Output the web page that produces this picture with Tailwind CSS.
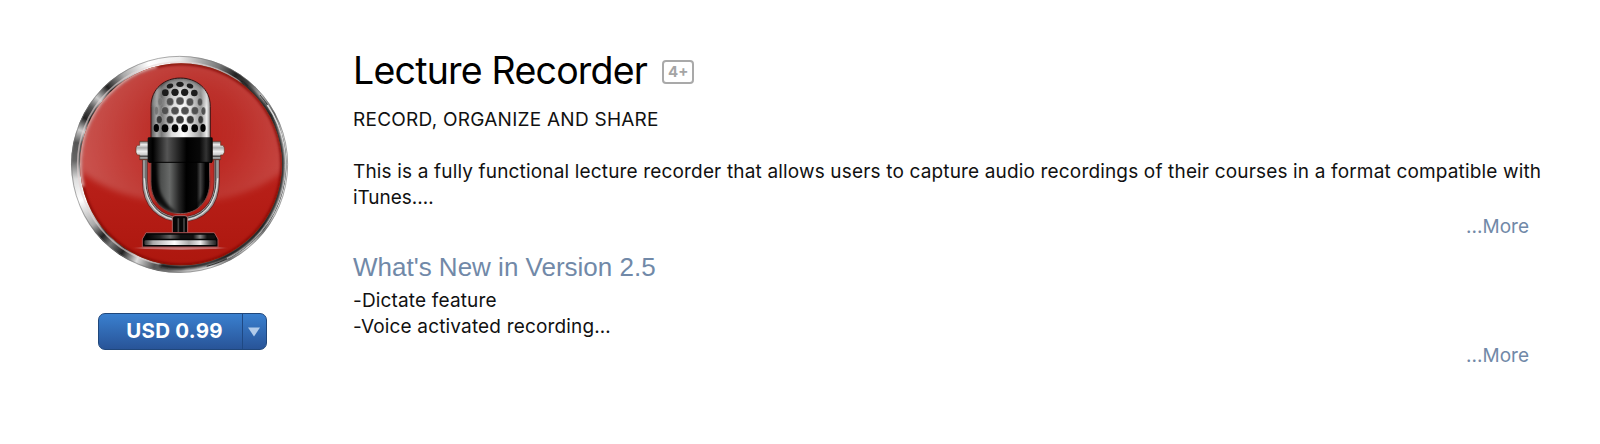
<!DOCTYPE html>
<html lang="en">
<head>
    <meta charset="UTF-8">
    <meta name="viewport" content="width=device-width, initial-scale=1.0">
    <title>Lecture Recorder</title>
    <script src="https://cdn.jsdelivr.net/npm/@tailwindcss/browser@4"></script>
</head>
<body class="bg-white text-[#111] font-['Inter','Liberation_Sans',sans-serif]">

    <main class="flex w-[1600px] h-[444px] overflow-hidden">

        <!-- Icon and price -->
        <aside class="w-[353px] shrink-0 pl-[60px] pt-[45px]">
            <div class="grid w-[240px] h-[240px]">
                <div class="[grid-area:1/1] ml-[11px] mt-[11px] w-[217px] h-[217px] rounded-full bg-[conic-gradient(#eee_0deg,#aaa_12deg,#777_22deg,#222_32deg,#444_40deg,#bbb_50deg,#555_62deg,#ddd_72deg,#fff_100deg,#ddd_118deg,#777_128deg,#eee_140deg,#777_152deg,#eee_163deg,#ccc_176deg,#777_186deg,#555_194deg,#ddd_204deg,#222_213deg,#777_221deg,#222_227deg,#aaa_235deg,#fff_250deg,#ddd_262deg,#666_272deg,#555_282deg,#ccc_289deg,#222_296deg,#555_303deg,#ccc_309deg,#222_317deg,#aaa_328deg,#fff_343deg,#eee_360deg)]"></div>
                <svg class="[grid-area:1/1]" width="240" height="240" viewBox="0 0 720 720">
                    <defs>
                        <linearGradient id="disc" x1="0" y1="0" x2="0" y2="1">
                            <stop offset="0" stop-color="#b92b25"/>
                            <stop offset=".5" stop-color="#ba211b"/>
                            <stop offset="1" stop-color="#ad170e"/>
                        </linearGradient>
                        <radialGradient id="gloss" gradientUnits="userSpaceOnUse" cx="410" cy="250" r="350">
                            <stop offset="0" stop-color="#fff" stop-opacity="0"/>
                            <stop offset=".35" stop-color="#fff" stop-opacity=".04"/>
                            <stop offset="1" stop-color="#fff" stop-opacity=".22"/>
                        </radialGradient>
                        <linearGradient id="grille" x1="0" y1="0" x2="1" y2="0">
                            <stop offset="0" stop-color="#555"/>
                            <stop offset=".1" stop-color="#aaa"/>
                            <stop offset=".18" stop-color="#777"/>
                            <stop offset=".35" stop-color="#ddd"/>
                            <stop offset=".55" stop-color="#fff"/>
                            <stop offset=".72" stop-color="#ccc"/>
                            <stop offset=".84" stop-color="#999"/>
                            <stop offset=".94" stop-color="#eee"/>
                            <stop offset="1" stop-color="#888"/>
                        </linearGradient>
                        <linearGradient id="shade" x1="0" y1="0" x2="0" y2="1">
                            <stop offset="0" stop-color="#000" stop-opacity=".6"/>
                            <stop offset=".2" stop-color="#000" stop-opacity=".12"/>
                            <stop offset=".5" stop-color="#000" stop-opacity="0"/>
                        </linearGradient>
                        <linearGradient id="collar" x1="0" y1="0" x2="1" y2="0">
                            <stop offset="0" stop-color="#111"/>
                            <stop offset=".08" stop-color="#000"/>
                            <stop offset=".3" stop-color="#555"/>
                            <stop offset=".48" stop-color="#222"/>
                            <stop offset=".6" stop-color="#000"/>
                            <stop offset=".8" stop-color="#080808"/>
                            <stop offset=".9" stop-color="#333"/>
                            <stop offset="1" stop-color="#000"/>
                        </linearGradient>
                        <linearGradient id="cup" x1="0" y1="0" x2="1" y2="0">
                            <stop offset="0" stop-color="#000"/>
                            <stop offset=".08" stop-color="#111"/>
                            <stop offset=".17" stop-color="#4c4e4d"/>
                            <stop offset=".32" stop-color="#686a69"/>
                            <stop offset=".48" stop-color="#252525"/>
                            <stop offset=".6" stop-color="#000"/>
                            <stop offset=".78" stop-color="#080808"/>
                            <stop offset=".84" stop-color="#444"/>
                            <stop offset=".93" stop-color="#000"/>
                        </linearGradient>
                        <linearGradient id="knob" x1="0" y1="0" x2="0" y2="1">
                            <stop offset="0" stop-color="#777"/>
                            <stop offset=".18" stop-color="#eee"/>
                            <stop offset=".35" stop-color="#aaa"/>
                            <stop offset=".55" stop-color="#eee"/>
                            <stop offset=".72" stop-color="#ccc"/>
                            <stop offset=".82" stop-color="#444"/>
                            <stop offset=".9" stop-color="#bbb"/>
                            <stop offset="1" stop-color="#444"/>
                        </linearGradient>
                        <linearGradient id="chrome" x1="0" y1="0" x2="1" y2="0">
                            <stop offset="0" stop-color="#333"/>
                            <stop offset=".12" stop-color="#aaa"/>
                            <stop offset=".42" stop-color="#fff"/>
                            <stop offset=".62" stop-color="#aaa"/>
                            <stop offset=".78" stop-color="#eee"/>
                            <stop offset=".9" stop-color="#666"/>
                            <stop offset="1" stop-color="#222"/>
                        </linearGradient>
                        <linearGradient id="foot" x1="0" y1="0" x2="1" y2="0">
                            <stop offset="0" stop-color="#000"/>
                            <stop offset=".2" stop-color="#222"/>
                            <stop offset=".35" stop-color="#666"/>
                            <stop offset=".5" stop-color="#111"/>
                            <stop offset=".68" stop-color="#111"/>
                            <stop offset=".78" stop-color="#888"/>
                            <stop offset=".88" stop-color="#111"/>
                        </linearGradient>
                        <radialGradient id="floor">
                            <stop offset="0" stop-color="#c99" stop-opacity=".9"/>
                            <stop offset=".75" stop-color="#c88" stop-opacity=".7"/>
                            <stop offset="1" stop-color="#b33" stop-opacity="0"/>
                        </radialGradient>
                        <filter id="soft"><feGaussianBlur stdDeviation="5"/></filter>
                        <filter id="softer"><feGaussianBlur stdDeviation="9"/></filter>
                        <clipPath id="inside"><circle cx="363" cy="358" r="303"/></clipPath>
                    </defs>

                    <!-- Rim -->
                    <circle cx="359" cy="358" r="324" fill="none" stroke="#777" stroke-opacity=".6" stroke-width="3"/>
                    <path d="M600 150A316 316 0 0 1 440 664" fill="none" stroke="#444" stroke-width="3"/>
                    <path d="M622 180A316 316 0 0 1 500 640" fill="none" stroke="#fff" stroke-width="5"/>
                    <circle cx="359" cy="357" r="306" fill="none" stroke="#e6d5d5" stroke-opacity=".6" stroke-width="5"/>
                    <path d="M540 112A306 306 0 0 1 300 660" fill="none" stroke="#111" stroke-width="12" filter="url(#soft)"/>

                    <!-- Disc -->
                    <circle cx="363" cy="358" r="303" fill="url(#disc)"/>
                    <g clip-path="url(#inside)">
                        <path d="M0 -20H730V330C630 425 520 472 370 472S110 430 0 330Z" fill="url(#gloss)" filter="url(#softer)"/>
                        <circle cx="363" cy="358" r="304" fill="none" stroke="#7c0904" stroke-width="10" filter="url(#soft)"/>
                        <path d="M68 425A303 303 0 0 1 290 63" fill="none" stroke="#e7b5b2" stroke-width="11" filter="url(#soft)"/>
                    </g>

                    <!-- Yoke -->
                    <path d="M255 345V410C255 480 300 523 363 523S470 480 470 410V345" fill="none" stroke="#702020" stroke-width="18"/>
                    <path d="M255 345V410C255 480 300 523 363 523S470 480 470 410V345" fill="none" stroke="#999" stroke-width="13"/>
                    <path d="M258 345V410C258 478 302 520 363 520S467 478 467 410V345" fill="none" stroke="#444" stroke-width="3"/>
                    <path d="M253 400C255 482 300 525 363 525S470 482 473 400" fill="none" stroke="#ddd" stroke-width="4"/>

                    <!-- Grille -->
                    <path d="M273 282V184C273 130 315 99 361 99S451 130 451 184V282Z" fill="url(#grille)" stroke="#411" stroke-width="3"/>
                    <path d="M273 282V184C273 130 315 99 361 99S451 130 451 184V282Z" fill="url(#shade)"/>
                    <path d="M281 184C283 138 320 109 361 109S441 138 443 184" fill="none" stroke="#ccc" stroke-opacity=".5" stroke-width="5" filter="url(#soft)"/>
                    <g fill="#1c1c1c">
                        <ellipse cx="330" cy="123" rx="10" ry="7" transform="rotate(-20 330 123)"/>
                        <ellipse cx="360" cy="118" rx="11" ry="8"/>
                        <ellipse cx="390" cy="123" rx="10" ry="7" transform="rotate(20 390 123)"/>
                        <ellipse cx="316" cy="143" rx="10" ry="10"/>
                        <ellipse cx="345" cy="142" rx="11" ry="11"/>
                        <ellipse cx="374" cy="142" rx="11" ry="11"/>
                        <ellipse cx="403" cy="144" rx="10" ry="10"/>
                    </g>
                    <g fill="#505050" stroke="#ddd" stroke-width="1">
                        <ellipse cx="301" cy="170" rx="7" ry="12" fill="#777" stroke="#999"/>
                        <ellipse cx="330" cy="170" rx="11" ry="12"/>
                        <ellipse cx="360" cy="168" rx="12" ry="12"/>
                        <ellipse cx="390" cy="171" rx="11" ry="12"/>
                        <ellipse cx="420" cy="171" rx="8" ry="12"/>
                        <ellipse cx="289" cy="197" rx="6" ry="12" fill="#777" stroke="#999"/>
                        <ellipse cx="315" cy="197" rx="11" ry="12"/>
                        <ellipse cx="345" cy="197" rx="12" ry="12"/>
                        <ellipse cx="375" cy="197" rx="12" ry="12"/>
                        <ellipse cx="405" cy="197" rx="11" ry="12"/>
                        <ellipse cx="430" cy="198" rx="7" ry="12"/>
                    </g>
                    <g fill="#383838" stroke="#ddd" stroke-width="1">
                        <ellipse cx="298" cy="224" rx="9" ry="12"/>
                        <ellipse cx="330" cy="224" rx="11" ry="12"/>
                        <ellipse cx="360" cy="224" rx="12" ry="12"/>
                        <ellipse cx="391" cy="224" rx="11" ry="12"/>
                        <ellipse cx="422" cy="224" rx="8" ry="12"/>
                    </g>
                    <g fill="#030303">
                        <ellipse cx="289" cy="249" rx="8" ry="12"/>
                        <ellipse cx="315" cy="250" rx="10" ry="12"/>
                        <ellipse cx="345" cy="250" rx="10" ry="12"/>
                        <ellipse cx="374" cy="250" rx="10" ry="12"/>
                        <ellipse cx="404" cy="250" rx="10" ry="12"/>
                        <ellipse cx="429" cy="249" rx="8" ry="12"/>
                    </g>

                    <!-- Knobs -->
                    <g fill="url(#knob)" stroke="#632" stroke-width="2">
                        <path d="M239 289H266V344H239V330H232L228 322V308L232 301H239Z"/>
                        <path d="M456 289H482V301H489L493 308V322L489 330H482V344H456Z"/>
                    </g>

                    <!-- Body -->
                    <path d="M273 345H449V410C449 465 416 506 361 506S273 465 273 410Z" fill="url(#cup)" stroke="#8d5552" stroke-width="3"/>
                    <path d="M276 352H288C287 420 300 465 350 503C302 496 276 460 276 410Z" fill="#000" fill-opacity=".85" filter="url(#soft)"/>
                    <path d="M446 380C442 440 420 485 375 502C410 490 445 465 446 410Z" fill="#000" filter="url(#soft)"/>
                    <rect x="263" y="277" width="195" height="75" rx="4" fill="url(#collar)"/>
                    <path d="M266 352H456" stroke="#000" stroke-width="3"/>

                    <!-- Stand -->
                    <ellipse cx="361" cy="609" rx="150" ry="6" fill="url(#floor)"/>
                    <path d="M337 566V520Q337 512 345 512H375Q383 512 383 520V566Z" fill="#060606" stroke="#a66" stroke-width="3"/>
                    <path d="M355 520V562M372 520V562" stroke="#444" stroke-width="5"/>
                    <path d="M247 606V582L258 563H463L474 582V606Z" fill="#050505" stroke="#a55" stroke-width="3"/>
                    <rect x="258" y="569" width="208" height="12" rx="5" fill="url(#foot)"/>
                    <rect x="253" y="586" width="216" height="14" rx="4" fill="url(#chrome)"/>
                </svg>
            </div>

            <button class="ml-[38px] mt-[28px] flex w-[169px] h-[37px] overflow-hidden rounded-[7px] border border-[#20477b] bg-linear-to-b from-[#3a80cf] to-[#285498] text-white">
                <span class="flex w-[144px] h-full items-center justify-center border-r border-[#1f4984] pl-[8px] text-[20.5px] font-bold tracking-[0.25px] whitespace-nowrap">USD 0.99</span>
                <span class="flex h-full grow items-center justify-center pr-[2px]">
                    <svg width="12" height="10" viewBox="0 0 12 10"><path d="M0 .5H12L6 9.5Z" fill="#b2cbea"/></svg>
                </span>
            </button>
        </aside>

        <!-- Description -->
        <section class="w-[1201px] text-[19px] leading-[26px] whitespace-nowrap">
            <div class="mt-[47px] flex h-[48px] items-center text-black">
                <h1 class="text-[37.5px] leading-[48px] tracking-[-0.78px]">Lecture Recorder</h1>
                <span class="ml-[15px] mt-[1px] flex h-[24px] w-[32px] items-center justify-center rounded-[4px] border-2 border-[#a9a9a9] text-[15px] font-bold text-[#a5a5a5]">4+</span>
            </div>
            <h2 class="mt-[12px] tracking-[0.25px]">RECORD, ORGANIZE AND SHARE</h2>
            <p class="mt-[26px] tracking-[0.16px]">This is a fully functional lecture recorder that allows users to capture audio recordings of their courses in a format compatible with<br><span class="tracking-[-0.05px]">iTunes.…</span></p>
            <div class="mt-[3px] pr-[25px] text-right text-[#7189a8]"><a href="#">...More</a></div>
            <h3 class="mt-[9px] font-['Liberation_Sans',sans-serif] text-[26px] leading-[36px] text-[#7189a8]">What's New in Version 2.5</h3>
            <p class="mt-[3px] tracking-[0.165px]">-Dictate feature<br>-Voice activated recording…</p>
            <div class="mt-[3px] pr-[25px] text-right text-[#7189a8]"><a href="#">...More</a></div>
        </section>
    </main>

</body>
</html>
